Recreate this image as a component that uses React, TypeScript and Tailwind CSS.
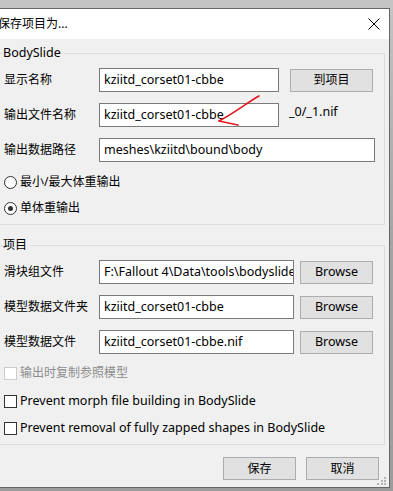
import React from "react";

const font = "font-['Noto_Sans','Noto_Sans_CJK_SC',sans-serif]";
// latin text renders a touch narrower than Segoe UI, bump it
const latin = "text-[12.5px]";

const TextBox = ({ value, width }: { value: string; width: string }) => (
    <div className={`${width} ${latin} flex h-[24px] items-center overflow-hidden whitespace-nowrap border border-[#7a7a7a] bg-white pl-[4px]`}>
        {value}
    </div>
);

const Button = ({ label, width, isLatin }: { label: string; width: string; isLatin?: boolean }) => (
    <button type="button" className={`${width} ${isLatin ? latin : ""} flex h-[23px] items-center justify-center border border-[#adadad] bg-[#e1e1e1]`}>
        {label}
    </button>
);

const Radio = ({ checked, label }: { checked?: boolean; label: string }) => (
    <div className="flex h-[16px] items-center">
        <span className="flex size-[13px] items-center justify-center rounded-full border border-[#333333] bg-white">
            {checked && <span className="size-[5px] rounded-full bg-[#333333]" />}
        </span>
        <span className="ml-[3px]">{label}</span>
    </div>
);

const Check = ({ label, disabled }: { label: string; disabled?: boolean }) => (
    <div className="flex h-[16px] items-center">
        <span className={`size-[13px] border bg-white ${disabled ? "border-[#cccccc]" : "border-[#333333]"}`} />
        <span className={`ml-[3px] ${disabled ? "text-[#8d8d8d]" : latin}`}>{label}</span>
    </div>
);

export default function App() {
    return (
        <div className={`relative h-[491px] w-[393px] overflow-hidden bg-gradient-to-b from-[#c4c4c4] via-[#a4a4a4] to-[#9c9c9c] text-[12px] leading-[16px] text-black ${font}`}>
            <div className="mt-[8px] flex h-[480px] w-[390px] flex-col border-b border-r border-t border-[#666666]">
                {/* title bar */}
                <div className="flex h-[30px] items-center justify-between bg-white">
                    <span className="-ml-[2px]">保存项目为...</span>
                    <svg width="12" height="12" viewBox="0 0 12 12" className="mr-[9px]">
                        <path d="M0.5 0.5 L11.5 11.5 M11.5 0.5 L0.5 11.5" stroke="#000" strokeWidth="1" />
                    </svg>
                </div>

                {/* client */}
                <div className="flex flex-1 flex-col bg-[#f0f0f0]">
                    <fieldset className="-ml-[6px] mt-[6px] w-[391px] border border-[#dcdcdc] pb-[8px] pl-[9px] pt-[7px]">
                        <legend className={`-ml-[1px] pr-[3px] ${latin}`}>BodySlide</legend>
                        <div className="flex h-[24px] items-center">
                            <span className="w-[95px]">显示名称</span>
                            <TextBox value="kziitd_corset01-cbbe" width="w-[180px]" />
                            <span className="ml-[11px]"><Button label="到项目" width="w-[83px]" /></span>
                        </div>
                        <div className="mt-[11px] flex h-[24px] items-start">
                            <span className="w-[95px] self-center">输出文件名称</span>
                            <TextBox value="kziitd_corset01-cbbe" width="w-[180px]" />
                            <span className={`ml-[10px] mt-[1px] ${latin}`}>_0/_1.nif</span>
                        </div>
                        <div className="mt-[11px] flex h-[24px] items-center">
                            <span className="w-[95px]">输出数据路径</span>
                            <TextBox value="meshes\kziitd\bound\body" width="w-[276px]" />
                        </div>
                        <div className="mt-[12px]">
                            <Radio label="最小/最大体重输出" />
                        </div>
                        <div className="mt-[10px]">
                            <Radio checked label="单体重输出" />
                        </div>
                    </fieldset>

                    <fieldset className="-ml-[6px] mt-[12px] w-[391px] border border-[#dcdcdc] pb-[8px] pl-[9px] pt-[7px]">
                        <legend className="-ml-[1px] pr-[3px]">项目</legend>
                        <div className="flex h-[24px] items-center">
                            <span className="w-[95px]">滑块组文件</span>
                            <TextBox value="F:\Fallout 4\Data\tools\bodyslide\SliderSets" width="w-[195px]" />
                            <span className="ml-[6px]"><Button isLatin label="Browse" width="w-[73px]" /></span>
                        </div>
                        <div className="mt-[11px] flex h-[24px] items-center">
                            <span className="w-[95px]">模型数据文件夹</span>
                            <TextBox value="kziitd_corset01-cbbe" width="w-[195px]" />
                            <span className="ml-[6px]"><Button isLatin label="Browse" width="w-[73px]" /></span>
                        </div>
                        <div className="mt-[11px] flex h-[24px] items-center">
                            <span className="w-[95px]">模型数据文件</span>
                            <TextBox value="kziitd_corset01-cbbe.nif" width="w-[195px]" />
                            <span className="ml-[6px]"><Button isLatin label="Browse" width="w-[73px]" /></span>
                        </div>
                        <div className="mt-[11px]">
                            <Check disabled label="输出时复制参照模型" />
                        </div>
                        <div className="mt-[12px]">
                            <Check label="Prevent morph file building in BodySlide" />
                        </div>
                        <div className="mt-[11px]">
                            <Check label="Prevent removal of fully zapped shapes in BodySlide" />
                        </div>
                    </fieldset>

                    <div className="mt-[12px] flex justify-end gap-[10px] pr-[10px]">
                        <Button label="保存" width="w-[73px]" />
                        <Button label="取消" width="w-[73px]" />
                    </div>
                </div>
            </div>

            {/* size grip */}
            <svg width="10" height="10" viewBox="0 0 10 10" className="absolute left-[377px] top-[476px]">
                <rect x="7" y="1" width="2" height="2" fill="#b4b4b4" />
                <rect x="4" y="4" width="2" height="2" fill="#b4b4b4" />
                <rect x="7" y="4" width="2" height="2" fill="#b4b4b4" />
                <rect x="0" y="7" width="2" height="2" fill="#b4b4b4" />
                <rect x="4" y="7" width="2" height="2" fill="#b4b4b4" />
                <rect x="7" y="7" width="2" height="2" fill="#b4b4b4" />
            </svg>

            {/* red annotation arrow */}
            <svg width="393" height="491" className="pointer-events-none absolute left-0 top-0">
                <path d="M259 96 C 248 102, 236 112, 219 121" fill="none" stroke="#e5161c" strokeWidth="1.6" strokeLinecap="round" />
                <path d="M219 121 L 238 125" fill="none" stroke="#e5161c" strokeWidth="1.6" strokeLinecap="round" />
            </svg>
        </div>
    );
}
